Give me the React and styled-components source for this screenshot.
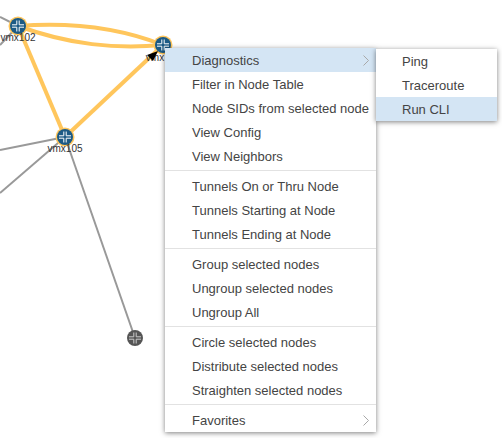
import React from 'react';
import styled, { createGlobalStyle } from 'styled-components';

const GlobalStyle = createGlobalStyle`
  html, body {
    margin: 0;
    padding: 0;
    background: #fff;
  }
`;

const Page = styled.div`
  position: relative;
  width: 502px;
  height: 438px;
  overflow: hidden;
  background: #fff;
  font-family: "Liberation Sans", Arial, sans-serif;
`;

const Topology = styled.svg`
  display: block;
  width: 502px;
  height: 438px;
`;

const NodeLabel = styled.text`
  font-family: "Liberation Sans", Arial, sans-serif;
  font-size: 10px;
  fill: #333;
  text-anchor: middle;
`;

const Menu = styled.ul`
  position: absolute;
  left: ${p => p.left}px;
  top: ${p => p.top}px;
  width: ${p => p.width}px;
  margin: 0;
  padding: 0;
  list-style: none;
  background: #fff;
  box-shadow: 0 1px 5px rgba(0, 0, 0, 0.5);
`;

const Item = styled.li`
  position: relative;
  height: 24px;
  line-height: 25px;
  padding-left: ${p => p.indent}px;
  font-size: 13px;
  color: #444;
  white-space: nowrap;
  background: ${p => (p.active ? '#d4e5f4' : 'transparent')};
`;

const Arrow = styled.svg`
  position: absolute;
  right: 7px;
  top: 7px;
  width: 6px;
  height: 11px;
  fill: none;
  stroke: #a8a8a8;
  stroke-width: 1;
`;

const Divider = styled.li`
  height: 1px;
  margin: 2px 0 3px;
  background: #e2e2e2;
`;

const groups = [
  [
    { label: 'Diagnostics', active: true, more: true },
    { label: 'Filter in Node Table' },
    { label: 'Node SIDs from selected node' },
    { label: 'View Config' },
    { label: 'View Neighbors' },
  ],
  [
    { label: 'Tunnels On or Thru Node' },
    { label: 'Tunnels Starting at Node' },
    { label: 'Tunnels Ending at Node' },
  ],
  [
    { label: 'Group selected nodes' },
    { label: 'Ungroup selected nodes' },
    { label: 'Ungroup All' },
  ],
  [
    { label: 'Circle selected nodes' },
    { label: 'Distribute selected nodes' },
    { label: 'Straighten selected nodes' },
  ],
  [{ label: 'Favorites', more: true }],
];

const Router = ({ x, y, selected, color = '#1c5a85' }) => (
  <g transform={`translate(${x} ${y})`}>
    {selected && <circle r="9.5" fill="#ffc65c" />}
    <circle r="8" fill={color} />
    <path
      d="M-6 -1.2H-1.2V-5.5M1.2 -5.5V-1.2H6M6 1.2H1.2V5.5M-1.2 5.5V1.2H-6"
      stroke={selected ? '#fff' : '#ccc'}
      strokeWidth="1"
      fill="none"
    />
  </g>
);

const Graph = () => (
  <Topology viewBox="0 0 502 438">
    <g stroke="#999" strokeWidth="2" fill="none">
      <path d="M18 26L0 17" />
      <path d="M18 26L0 45" />
      <path d="M65 137L0 150" />
      <path d="M65 137L0 193" />
      <path d="M65 137L135 338" />
    </g>
    <g stroke="#ffc65c" strokeWidth="4" fill="none">
      <path d="M18 26C70 22 120 28 163 45" />
      <path d="M18 26C70 45 115 49 163 45" />
      <path d="M18 26L65 137" />
      <path d="M65 137L163 45" />
    </g>
    <Router x={18} y={26} selected />
    <Router x={65} y={137} selected />
    <Router x={163} y={45} selected />
    <Router x={135} y={338} color="#555" />
    <NodeLabel x={18} y={41}>vmx102</NodeLabel>
    <NodeLabel x={65} y={152}>vmx105</NodeLabel>
    <NodeLabel x={155} y={61}>vmx</NodeLabel>
    <path d="M158 51L147 55L153 61Z" fill="#000" />
  </Topology>
);

const Chevron = () => (
  <Arrow viewBox="0 0 6 11">
    <path d="M0.5 0.5L5.5 5.5L0.5 10.5" />
  </Arrow>
);

export default function App() {
  return (
    <Page>
      <GlobalStyle />
      <Graph />
      <Menu left={165} top={48} width={211}>
        {groups.map((group, i) => (
          <React.Fragment key={i}>
            {i > 0 && <Divider />}
            {group.map(item => (
              <Item key={item.label} indent={27} active={item.active}>
                {item.label}
                {item.more && <Chevron />}
              </Item>
            ))}
          </React.Fragment>
        ))}
      </Menu>
      <Menu left={376} top={49} width={121}>
        <Item indent={26}>Ping</Item>
        <Item indent={26}>Traceroute</Item>
        <Item indent={26} active>Run CLI</Item>
      </Menu>
    </Page>
  );
}
